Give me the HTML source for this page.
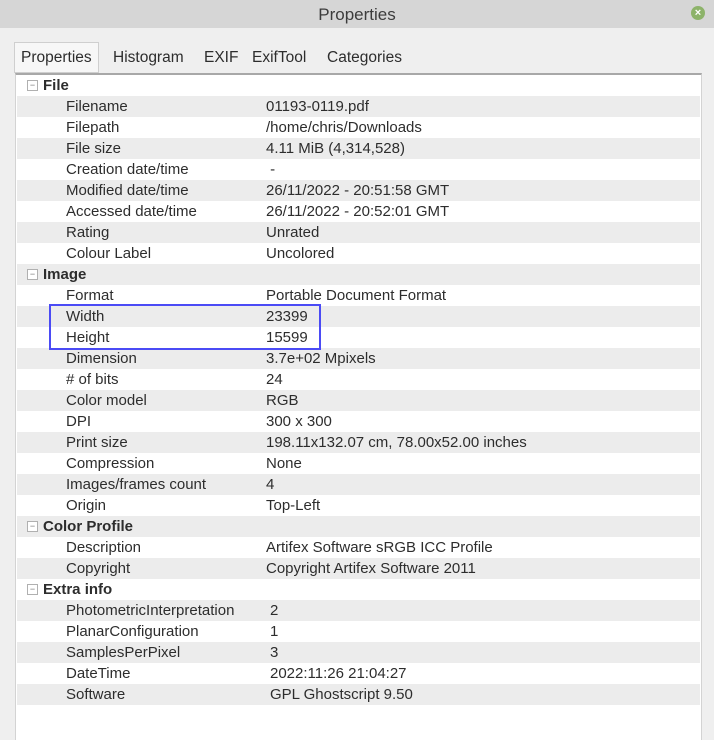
<!DOCTYPE html>
<html><head><style>
html,body{margin:0;width:714px;height:740px;overflow:hidden}
body{background:#efefef;font-family:"Liberation Sans",sans-serif;font-size:15px;color:#2d2d2d;position:relative}
.title{position:absolute;left:0;top:0;width:714px;height:28px;background:#d6d6d6;text-align:center;line-height:29px;font-size:17px;color:#3c3c3c}
.close{position:absolute;left:691px;top:6px;width:14px;height:14px;border-radius:50%;background:#8db36a;color:#fff;font-size:11px;line-height:14px;text-align:center;font-weight:bold}
.tabs{position:absolute;top:42px;left:14px;height:30px;font-size:15.5px}
.tab{position:absolute;top:0;line-height:31px;white-space:nowrap}
.sel{border:1px solid #cfcfcf;background:#f7f7f7;padding:0 6px;height:29px;line-height:29px;left:0;top:0}
.panel{position:absolute;left:15px;top:73px;width:685px;height:670px;background:#fff;border:1px solid #d3d3d3;border-top:2px solid #a8a8a8}
.row{position:absolute;left:1px;width:683px;height:21px;line-height:21px}
.g{background:#ececec}
.l{position:absolute;left:49px}
.v{position:absolute;left:249px}
.h{position:absolute;left:26px;font-weight:bold}
.m{position:absolute;left:10px;top:5px;width:9px;height:9px;border:1px solid #b0b0b0;font-size:9px;line-height:8px;text-align:center;color:#777;background:#fff}
.box{position:absolute;left:49px;top:304px;width:268px;height:42px;border:2px solid #4b4bf5}
</style></head><body>
<div class="title">Properties<div class="close">×</div></div>
<div class="tabs">
<div class="tab sel">Properties</div>
<div class="tab" style="left:99px">Histogram</div>
<div class="tab" style="left:190px">EXIF</div>
<div class="tab" style="left:238px">ExifTool</div>
<div class="tab" style="left:313px">Categories</div>
</div>
<div class="panel">
<div class="row" style="top:0"><div class="m">−</div><span class="h">File</span></div>
<div class="row g" style="top:21px"><span class="l">Filename</span><span class="v">01193-0119.pdf</span></div>
<div class="row" style="top:42px"><span class="l">Filepath</span><span class="v">/home/chris/Downloads</span></div>
<div class="row g" style="top:63px"><span class="l">File size</span><span class="v">4.11 MiB (4,314,528)</span></div>
<div class="row" style="top:84px"><span class="l">Creation date/time</span><span class="v">&nbsp;-</span></div>
<div class="row g" style="top:105px"><span class="l">Modified date/time</span><span class="v">26/11/2022 - 20:51:58 GMT</span></div>
<div class="row" style="top:126px"><span class="l">Accessed date/time</span><span class="v">26/11/2022 - 20:52:01 GMT</span></div>
<div class="row g" style="top:147px"><span class="l">Rating</span><span class="v">Unrated</span></div>
<div class="row" style="top:168px"><span class="l">Colour Label</span><span class="v">Uncolored</span></div>
<div class="row g" style="top:189px"><div class="m">−</div><span class="h">Image</span></div>
<div class="row" style="top:210px"><span class="l">Format</span><span class="v">Portable Document Format</span></div>
<div class="row g" style="top:231px"><span class="l">Width</span><span class="v">23399</span></div>
<div class="row" style="top:252px"><span class="l">Height</span><span class="v">15599</span></div>
<div class="row g" style="top:273px"><span class="l">Dimension</span><span class="v">3.7e+02 Mpixels</span></div>
<div class="row" style="top:294px"><span class="l"># of bits</span><span class="v">24</span></div>
<div class="row g" style="top:315px"><span class="l">Color model</span><span class="v">RGB</span></div>
<div class="row" style="top:336px"><span class="l">DPI</span><span class="v">300 x 300</span></div>
<div class="row g" style="top:357px"><span class="l">Print size</span><span class="v">198.11x132.07 cm, 78.00x52.00 inches</span></div>
<div class="row" style="top:378px"><span class="l">Compression</span><span class="v">None</span></div>
<div class="row g" style="top:399px"><span class="l">Images/frames count</span><span class="v">4</span></div>
<div class="row" style="top:420px"><span class="l">Origin</span><span class="v">Top-Left</span></div>
<div class="row g" style="top:441px"><div class="m">−</div><span class="h">Color Profile</span></div>
<div class="row" style="top:462px"><span class="l">Description</span><span class="v">Artifex Software sRGB ICC Profile</span></div>
<div class="row g" style="top:483px"><span class="l">Copyright</span><span class="v">Copyright Artifex Software 2011</span></div>
<div class="row" style="top:504px"><div class="m">−</div><span class="h">Extra info</span></div>
<div class="row g" style="top:525px"><span class="l">PhotometricInterpretation</span><span class="v" style="left:253px">2</span></div>
<div class="row" style="top:546px"><span class="l">PlanarConfiguration</span><span class="v" style="left:253px">1</span></div>
<div class="row g" style="top:567px"><span class="l">SamplesPerPixel</span><span class="v" style="left:253px">3</span></div>
<div class="row" style="top:588px"><span class="l">DateTime</span><span class="v" style="left:253px">2022:11:26 21:04:27</span></div>
<div class="row g" style="top:609px"><span class="l">Software</span><span class="v" style="left:253px">GPL Ghostscript 9.50</span></div>
</div>
<div class="box"></div>
</body></html>
